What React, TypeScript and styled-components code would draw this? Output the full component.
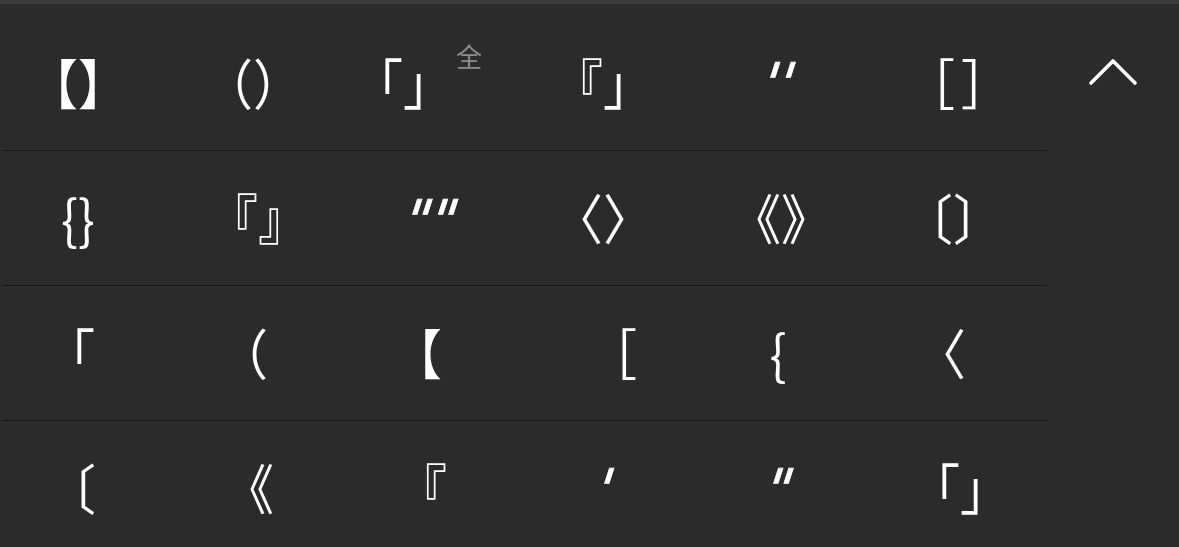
import React from 'react';
import styled, { createGlobalStyle } from 'styled-components';

const Global = createGlobalStyle`
  html, body { margin: 0; padding: 0; background: #2b2b2b; }
  body {
    width: 1179px;
    height: 547px;
    overflow: hidden;
    font-family: "Noto Sans CJK SC", "Noto Sans", sans-serif;
  }
`;

const Panel = styled.div`
  width: 1179px;
  height: 547px;
  box-sizing: border-box;
  background: #2b2b2b;
  border-top: 4px solid #3b3b3d;
  display: flex;
  overflow: hidden;
`;

const Candidates = styled.div`
  width: 1047px;
  padding-top: 12px;
  display: flex;
  flex-direction: column;
`;

const Row = styled.div`
  display: grid;
  grid-template-columns: repeat(6, 156px);
  column-gap: 19px;
  height: 134px;
  flex: none;
`;

const Divider = styled.div`
  height: 1px;
  margin-left: 3px;
  background: #151515;
  flex: none;
`;

const Cell = styled.div`
  position: relative;
  display: flex;
  align-items: center;
  justify-content: center;
  color: #ffffff;
  line-height: 1;
  white-space: nowrap;
`;

const Glyph = styled.span<{ $dx: number; $dy: number; $ls: number }>`
  display: inline-block;
  font-size: 50px;
  font-family: "Noto Sans CJK SC", "Noto Sans", sans-serif;
  letter-spacing: ${(p) => p.$ls}px;
  transform: translate(${(p) => p.$dx}px, ${(p) => p.$dy}px) scaleY(1.08);
`;

const Quote = styled.span<{ $dx: number; $dy: number }>`
  display: inline-block;
  font-size: 56px;
  font-family: "DejaVu Sans", sans-serif;
  -webkit-text-stroke: 0.6px #ffffff;
  transform: translate(${(p) => p.$dx}px, ${(p) => p.$dy}px) skewX(-18deg);
`;

const Badge = styled.span`
  position: absolute;
  left: 106px;
  top: 27px;
  font-size: 26px;
  line-height: 1;
  color: #8a8a8a;
`;

const Side = styled.div`
  flex: 1;
  display: flex;
  justify-content: center;
  padding-top: 52px;
`;

type C = { t: string; dx?: number; dy?: number; ls?: number; q?: boolean };

const rows: C[][] = [
  [{ t: '【】' }, { t: '（）' }, { t: '「」', dx: -25 }, { t: '『」' }, { t: "''", q: true, dx: 0, dy: 1 }, { t: '［］', dx: 8, ls: 6 }],
  [{ t: '{}' }, { t: '『』', dx: 5 }, { t: '""', q: true, dx: 3, dy: 3 }, { t: '〈〉' }, { t: '《》', dx: 3 }, { t: '〔〕' }],
  [{ t: '「', dx: -8 }, { t: '（', dx: -10 }, { t: '【', dx: -11 }, { t: '［', dx: 9 }, { t: '{' }, { t: '〈', dx: -12 }],
  [{ t: '〔', dx: -7 }, { t: '《', dx: -4 }, { t: '『', dx: -6 }, { t: "'", q: true, dx: 2, dy: 1.5 }, { t: '"', q: true, dx: 1, dy: 1.5 }, { t: '「」', dx: 7 }],
];

const Chevron = () => (
  <svg width="50" height="30" viewBox="0 0 50 30">
    <polyline points="3,27 25,5 47,27" fill="none" stroke="#ffffff" strokeWidth="3.6" strokeLinecap="round" strokeLinejoin="round" />
  </svg>
);

export default function App() {
  return (
    <>
      <Global />
      <Panel>
        <Candidates>
          {rows.map((r, i) => (
            <React.Fragment key={i}>
              <Row>
                {r.map((c, j) => (
                  <Cell key={j}>
                    {c.q ? (
                      <Quote $dx={c.dx ?? 0} $dy={c.dy ?? 0}>{c.t}</Quote>
                    ) : (
                      <Glyph $dx={c.dx ?? 0} $dy={c.dy ?? -2} $ls={c.ls ?? 0}>{c.t}</Glyph>
                    )}
                    {i === 0 && j === 2 && <Badge>全</Badge>}
                  </Cell>
                ))}
              </Row>
              {i < rows.length - 1 && <Divider />}
            </React.Fragment>
          ))}
        </Candidates>
        <Side>
          <Chevron />
        </Side>
      </Panel>
    </>
  );
}
